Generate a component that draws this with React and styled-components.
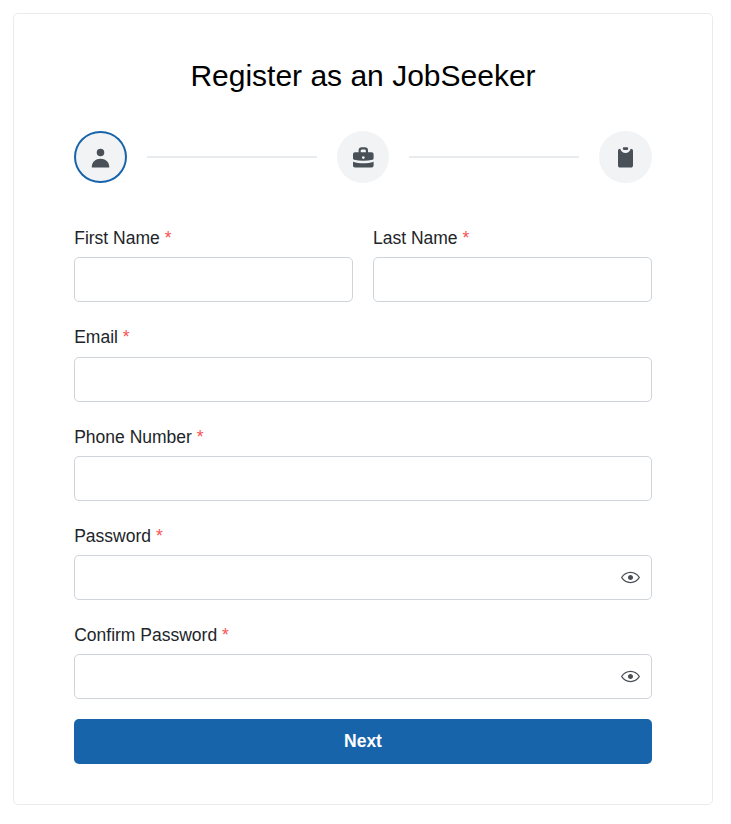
import React from "react";
import styled, { createGlobalStyle } from "styled-components";

const GlobalStyle = createGlobalStyle`
  * { box-sizing: border-box; }
  body {
    margin: 0;
    background: #fff;
    color: #212529;
    font-family: "Liberation Sans", Arial, sans-serif;
  }
`;

const Card = styled.form`
  width: 699.6px;
  height: 792px;
  margin: 13px 0 0 13.2px;
  padding: 39px 60px;
  border: 1px solid #e9ecef;
  border-radius: 5px;
`;

const Title = styled.h1`
  margin: 0;
  height: 45px;
  line-height: 45px;
  font-size: 30px;
  font-weight: 400;
  color: #000;
  text-align: center;
`;

const Stepper = styled.div`
  display: flex;
  align-items: center;
  gap: 20px;
  margin-top: 33px;
  height: 52px;
`;

const Step = styled.div`
  display: flex;
  flex: none;
  align-items: center;
  justify-content: center;
  width: 52.5px;
  height: 52px;
  border: 2px solid ${(p) => (p.$active ? "#1864ab" : "#f1f3f5")};
  border-radius: 50%;
  background: #f1f3f5;
  color: #495057;

  svg { display: block; flex: none; }
`;

const Separator = styled.div`
  flex: 1;
  height: 2px;
  background: #e9ecef;
`;

const Fields = styled.div`
  display: grid;
  grid-template-columns: 1fr 1fr;
  gap: 20px;
  margin-top: 41.35px;
`;

const FieldBox = styled.label`
  display: block;
  height: 79.2px;
  padding-top: 1.85px;
  grid-column: ${(p) => (p.$half ? "auto" : "1 / -1")};
`;

const Label = styled.span`
  display: block;
  height: 31.15px;
  line-height: 25px;
  font-size: 17.5px;
`;

const Required = styled.span`
  color: #fa5252;
`;

const InputShell = styled.span`
  display: flex;
  align-items: center;
  height: 45px;
  padding-right: 11px;
  border: 1px solid #ced4da;
  border-radius: 5px;
  background: #fff;
  color: #495057;
`;

const Input = styled.input`
  flex: 1;
  min-width: 0;
  height: 100%;
  padding: 0 15px;
  border: 0;
  outline: 0;
  background: transparent;
  font: inherit;
`;

const NextButton = styled.button`
  display: block;
  width: 100%;
  height: 45px;
  margin-top: 18.8px;
  padding: 0;
  border: 0;
  border-radius: 5px;
  background: #1864ab;
  color: #fff;
  font: bold 17.5px "Liberation Sans", Arial, sans-serif;
`;

const PersonIcon = () => (
  <svg width="22" height="22" viewBox="0 0 22 22" fill="currentColor">
    <circle cx="11.5" cy="6.4" r="3.75" />
    <path d="M2.8 21.6v-1.1c0-4.6 3.9-7.8 8.7-7.8s8.7 3.2 8.7 7.8v1.1Z" />
  </svg>
);

const BriefcaseIcon = () => (
  <svg width="22" height="22" viewBox="0 0 22 22" fill="currentColor">
    <path
      fillRule="evenodd"
      d="M6.6 6.3V4.6A3.3 3.3 0 0 1 9.9 1.3h2.8a3.3 3.3 0 0 1 3.3 3.3v1.7h3.6a2 2 0 0 1 2 2v4c0 .8-.4 1.3-1.1 1.5-5.8 1.4-12.6 1.4-18.4 0-.7-.2-1.1-.7-1.1-1.5v-4a2 2 0 0 1 2-2ZM8.7 6.3h5.2V4.9c0-1-.6-1.5-1.6-1.5h-2c-1 0-1.6.5-1.6 1.5ZM11.3 10.2a1.4 1.4 0 1 0 0 2.8 1.4 1.4 0 0 0 0-2.8Z"
    />
    <path d="M1 15.7c6.5 2.2 14.1 2.2 20.6 0v3.9c0 1.2-.8 2-2 2H3c-1.2 0-2-.8-2-2Z" />
  </svg>
);

const ClipboardIcon = () => (
  <svg width="22" height="22" viewBox="0 0 22 22" fill="currentColor">
    <path d="M5.3 2.7c.6 2.7 2.5 4.2 5.2 4.2s4.6-1.5 5.2-4.2c1.5 0 2.3.8 2.3 2v14.8c0 1.3-.8 2.1-2 2.1H5c-1.2 0-2-.8-2-2.1V4.7c0-1.2.8-2 2.3-2Z" />
    <path d="M8.7 1.2h3.6c.5 0 .8.3.8.8v1.1c0 .5-.3.8-.8.8H8.7c-.5 0-.8-.3-.8-.8V2c0-.5.3-.8.8-.8Z" />
  </svg>
);

const EyeIcon = () => (
  <svg width="19" height="19" viewBox="0 0 15 15" fill="currentColor">
    <path
      fillRule="evenodd"
      clipRule="evenodd"
      d="M7.5 11C4.80285 11 2.52952 9.62184 1.09622 7.50001C2.52952 5.37816 4.80285 4 7.5 4C10.1971 4 12.4705 5.37816 13.9038 7.50001C12.4705 9.62183 10.1971 11 7.5 11ZM7.5 3C4.30786 3 1.65639 4.70638 0.0760002 7.23501C-0.0253338 7.39715 -0.0253334 7.60288 0.0760014 7.76501C1.65639 10.2936 4.30786 12 7.5 12C10.6921 12 13.3436 10.2936 14.924 7.76501C15.0253 7.60288 15.0253 7.39715 14.924 7.23501C13.3436 4.70638 10.6921 3 7.5 3ZM7.5 9.5C8.60457 9.5 9.5 8.60457 9.5 7.5C9.5 6.39543 8.60457 5.5 7.5 5.5C6.39543 5.5 5.5 6.39543 5.5 7.5C5.5 8.60457 6.39543 9.5 7.5 9.5Z"
    />
  </svg>
);

function Field({ label, type = "text", half }) {
  return (
    <FieldBox $half={half}>
      <Label>
        {label} <Required>*</Required>
      </Label>
      <InputShell>
        <Input type={type} />
        {type === "password" && <EyeIcon />}
      </InputShell>
    </FieldBox>
  );
}

export default function App() {
  return (
    <>
      <GlobalStyle />
      <Card>
        <Title>Register as an JobSeeker</Title>
        <Stepper>
          <Step $active><PersonIcon /></Step>
          <Separator />
          <Step><BriefcaseIcon /></Step>
          <Separator />
          <Step><ClipboardIcon /></Step>
        </Stepper>
        <Fields>
          <Field label="First Name" half />
          <Field label="Last Name" half />
          <Field label="Email" />
          <Field label="Phone Number" />
          <Field label="Password" type="password" />
          <Field label="Confirm Password" type="password" />
        </Fields>
        <NextButton type="button">Next</NextButton>
      </Card>
    </>
  );
}
